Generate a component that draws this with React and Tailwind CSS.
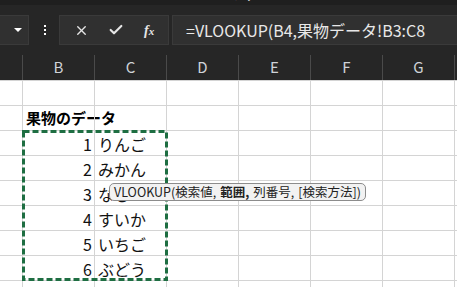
import { Check, X } from 'lucide-react'

const cols = ['A', 'B', 'C', 'D', 'E', 'F', 'G', 'H']
const fruits = ['りんご', 'みかん', 'なし', 'すいか', 'いちご', 'ぶどう']
const font = { fontFamily: '"Noto Sans CJK JP", "Noto Sans", sans-serif' }

function Row({ b, c, title }) {
  return (
    <div className="grid h-[25px] grid-cols-[22px_repeat(6,72px)_1fr] border-t border-[#d4d4d4]">
      {cols.map((col, i) => (
        <div key={col} className={`relative ${i > 0 ? 'border-l border-[#d4d4d4]' : ''}`}>
          {col === 'B' && title ? (
            <span className="absolute left-[3px] top-[1px] whitespace-nowrap text-[15px] font-bold text-black">{title}</span>
          ) : null}
          {col === 'B' && b ? (
            <span className="absolute right-[2px] top-[1px] text-[16px] text-[#111]">{b}</span>
          ) : null}
          {col === 'C' && c ? (
            <span className="absolute left-[3px] top-[1px] whitespace-nowrap text-[16px] text-[#111]">{c}</span>
          ) : null}
        </div>
      ))}
    </div>
  )
}

export default function App() {
  return (
    <div className="relative h-[287px] w-[457px] overflow-hidden bg-[#262626]" style={font}>
      <div className="relative h-[5px] overflow-hidden bg-[#1f1f1f]">
        <span className="absolute left-[232px] top-[-16px] text-[13px] text-white">ファイル</span>
      </div>

      <div className="flex h-[50px] items-start pt-[10px]">
        <div className="flex h-[30px] w-[29px] items-center justify-end border border-l-0 border-[#3a3a3a] bg-[#303030] pr-[6px]">
          <div className="h-0 w-0 border-x-[4px] border-t-[4px] border-x-transparent border-t-white" />
        </div>
        <div className="ml-[14px] flex h-[30px] w-[3px] flex-col items-center justify-center gap-[2px]">
          <span className="h-[2px] w-[2px] bg-white" />
          <span className="h-[2px] w-[2px] bg-white" />
          <span className="h-[2px] w-[2px] bg-white" />
        </div>
        <div className="ml-[13px] flex h-[30px] w-[110px] items-center justify-around border border-[#3a3a3a] bg-[#303030] px-[4px] text-[#e6e6e6]">
          <X className="h-[15px] w-[15px]" strokeWidth={2.2} />
          <Check className="h-[16px] w-[16px]" strokeWidth={3.2} />
          <span className="text-[14px] font-bold italic" style={{ fontFamily: '"Liberation Serif", serif' }}>
            f<span className="text-[11px]">x</span>
          </span>
        </div>
        <div className="ml-[3px] flex h-[30px] flex-1 items-center border border-r-0 border-[#3a3a3a] bg-[#303030] pl-[13px] text-[16px] text-[#e8e8e8]">
          <span className="whitespace-nowrap">=VLOOKUP(B4,果物データ!B3:C8</span>
        </div>
      </div>

      <div className="grid h-[25px] grid-cols-[22px_repeat(6,72px)_1fr]">
        {cols.map((col, i) => (
          <div
            key={col}
            className={`flex items-center justify-center text-[15px] text-[#cfd3d8] ${i > 0 ? 'border-l border-[#4a4a4a]' : ''}`}
          >
            {i > 0 && i < 7 ? col : ''}
          </div>
        ))}
      </div>

      <div className="bg-white">
        <Row />
        <Row title="果物のデータ" />
        {fruits.map((f, i) => (
          <Row key={f} b={i + 1} c={f} />
        ))}
        <Row />
      </div>

      <svg className="absolute left-[22px] top-[130px]" width="146" height="151">
        <rect x="1.5" y="1.5" width="143" height="148" fill="none" stroke="#1e6e42" strokeWidth="3" strokeDasharray="6 3" />
      </svg>

      <div className="absolute left-[109px] top-[183px] flex h-[18px] items-center gap-[4px] whitespace-nowrap rounded-[5px] border border-[#8c8c8c] bg-[#f2f2f2] px-[4px] text-[12.5px] text-[#222]">
        <span>VLOOKUP(検索値,</span>
        <b className="font-bold">範囲,</b>
        <span>列番号,</span>
        <span>[検索方法])</span>
      </div>
    </div>
  )
}
